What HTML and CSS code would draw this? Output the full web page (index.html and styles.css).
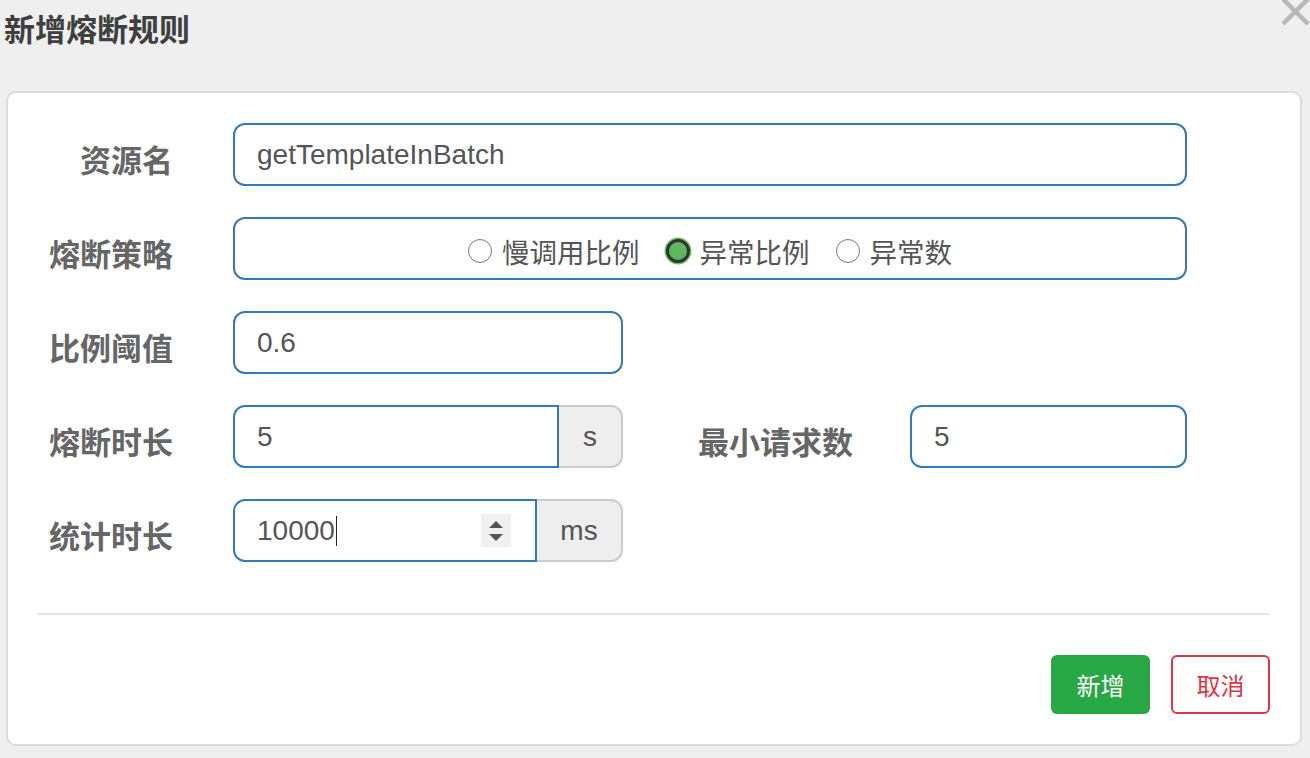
FILE: index.html
```html
<!DOCTYPE html>
<html lang="zh-CN">
<head>
<meta charset="utf-8">
<title>新增熔断规则</title>
<link rel="stylesheet" href="styles.css">
</head>
<body>
<div class="modal">
  <h4 class="title">新增熔断规则</h4>
  <svg class="close" width="28" height="26" viewBox="0 0 28 26" aria-label="close">
    <line x1="1" y1="-1" x2="26" y2="24" />
    <line x1="1" y1="24" x2="26" y2="-1" />
  </svg>
  <div class="card">
    <div class="row">
      <div class="label">资源名</div>
      <div class="input w-full">getTemplateInBatch</div>
    </div>
    <div class="row">
      <div class="label">熔断策略</div>
      <div class="input w-full radios">
        <span class="radio"></span><span class="radio-text">慢调用比例</span>
        <span class="radio checked"></span><span class="radio-text">异常比例</span>
        <span class="radio"></span><span class="radio-text">异常数</span>
      </div>
    </div>
    <div class="row">
      <div class="label">比例阈值</div>
      <div class="input w-half">0.6</div>
    </div>
    <div class="row">
      <div class="label">熔断时长</div>
      <div class="group">
        <div class="input grouped w-s">5</div>
        <div class="addon w-addon-s">s</div>
      </div>
      <div class="label label2">最小请求数</div>
      <div class="input w-min">5</div>
    </div>
    <div class="row">
      <div class="label">统计时长</div>
      <div class="group">
        <div class="input grouped w-ms">
          <span class="value">10000<span class="caret"></span></span>
          <span class="spinner"><span class="up"></span><span class="down"></span></span>
        </div>
        <div class="addon w-addon-ms">ms</div>
      </div>
    </div>
    <div class="divider"></div>
    <div class="footer">
      <div class="btn btn-add">新增</div>
      <div class="btn btn-cancel">取消</div>
    </div>
  </div>
</div>
</body>
</html>
```

FILE: styles.css
```css
html, body {
  margin: 0;
  padding: 0;
  background: #efefef;
  font-family: "Liberation Sans", "Noto Sans CJK SC", sans-serif;
}

.modal {
  position: relative;
  width: 1310px;
  height: 758px;
  overflow: hidden;
}

.title {
  margin: 0;
  padding-left: 4px;
  height: 56px;
  line-height: 56px;
  font-size: 31px;
  font-weight: bold;
  color: #3f3f3f;
  font-family: "Noto Sans CJK SC", sans-serif;
}

.close {
  position: absolute;
  top: 0;
  right: 0;
}

.close line {
  stroke: #b8b8b8;
  stroke-width: 4.5;
}

.card {
  margin: 35px 0 0 6px;
  width: 1296px;
  box-sizing: border-box;
  border: 2px solid #dcdcdc;
  border-radius: 10px;
  background: #fff;
  padding: 30px 0 30px 0;
}

.row {
  display: flex;
  align-items: center;
  height: 63px;
  margin-bottom: 31px;
}

.row:nth-child(5) {
  margin-bottom: 0;
}

.label {
  width: 165px;
  flex: none;
  text-align: right;
  font-size: 31px;
  font-weight: bold;
  color: #666;
  padding-top: 8px;
  font-family: "Noto Sans CJK SC", sans-serif;
  margin-right: 60px;
}

.label2 {
  width: 230px;
  margin-right: 57px;
}

.input {
  box-sizing: border-box;
  height: 63px;
  border: 2px solid #337ab7;
  border-radius: 12px;
  padding: 0 22px;
  display: flex;
  align-items: center;
  font-size: 28px;
  color: #555;
  background: #fff;
  flex: none;
}

.w-full { width: 954px; }
.w-half { width: 390px; }
.w-min { width: 277px; }
.w-s { width: 326px; }
.w-ms { width: 304px; }

.group {
  display: flex;
  flex: none;
}

.grouped {
  border-radius: 12px 0 0 12px;
}

.addon {
  box-sizing: border-box;
  height: 63px;
  border: 2px solid #ccc;
  border-left: none;
  border-radius: 0 12px 12px 0;
  background: #eee;
  display: flex;
  align-items: center;
  justify-content: center;
  font-size: 28px;
  color: #555;
}

.w-addon-s { width: 64px; }
.w-addon-ms { width: 86px; }

.radios {
  justify-content: center;
  font-family: "Noto Sans CJK SC", sans-serif;
  font-size: 27.5px;
  color: #555;
  padding-top: 4px;
}

.radio {
  box-sizing: border-box;
  width: 24px;
  height: 24px;
  border: 1.5px solid #777;
  border-radius: 50%;
  background: #fff;
  margin-right: 10px;
  flex: none;
}

.radio.checked {
  border: 3.5px solid #333;
  background: #5cb85c;
  box-shadow: 0 0 0 1.5px #6cc15c;
}

.radio-text {
  margin-right: 26px;
}

.radio-text:last-child {
  margin-right: 0;
}

.value {
  flex: 1;
  display: flex;
  align-items: center;
}

.caret {
  display: inline-block;
  width: 1.5px;
  height: 30px;
  background: #222;
  margin-left: 1px;
}

.spinner {
  width: 30px;
  height: 33px;
  background: #f0f0f0;
  display: flex;
  flex-direction: column;
  align-items: center;
  justify-content: center;
  gap: 6px;
  margin-right: 2px;
}

.up {
  width: 0;
  height: 0;
  border-left: 7px solid transparent;
  border-right: 7px solid transparent;
  border-bottom: 7px solid #555;
}

.down {
  width: 0;
  height: 0;
  border-left: 7px solid transparent;
  border-right: 7px solid transparent;
  border-top: 7px solid #555;
}

.divider {
  height: 2px;
  background: #e5e5e5;
  margin: 51px 30px 0 29px;
}

.footer {
  display: flex;
  justify-content: flex-end;
  gap: 21px;
  margin: 40px 30px 0 0;
}

.btn {
  box-sizing: border-box;
  width: 99px;
  height: 59px;
  border-radius: 6px;
  display: flex;
  align-items: center;
  justify-content: center;
  font-size: 24px;
  font-family: "Noto Sans CJK SC", sans-serif;
}

.btn-add {
  background: #28a745;
  color: #fff;
}

.btn-cancel {
  background: #fff;
  border: 2px solid #dc3545;
  color: #dc3545;
}
```
